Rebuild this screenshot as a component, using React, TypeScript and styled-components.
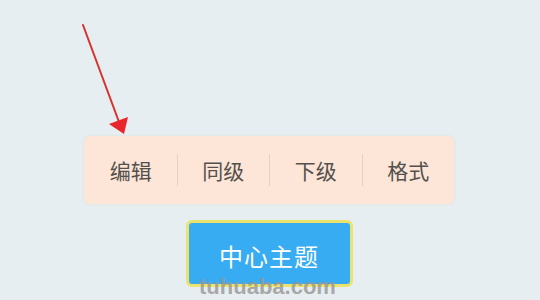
import styled, { createGlobalStyle } from "styled-components";

const GlobalStyle = createGlobalStyle`
  html, body {
    margin: 0;
    padding: 0;
    background: #e6eef1;
  }
`;

const items = ["编辑", "同级", "下级", "格式"];

export default function App() {
  return (
    <>
      <GlobalStyle />
      <Stage>
        <Arrow width="540" height="300" viewBox="0 0 540 300">
          <line x1="83" y1="25" x2="119" y2="122" stroke="#d8322c" strokeWidth="2" strokeLinecap="round" />
          <polygon points="124,134 109,124 128,117" fill="#e8262b" />
        </Arrow>
        <Toolbar>
          {items.map((label, i) => (
            <ToolItem key={label} $divider={i > 0}>
              {label}
            </ToolItem>
          ))}
        </Toolbar>
        <TopicButton>中心主题</TopicButton>
        <Watermark>tuhuaba.com</Watermark>
      </Stage>
    </>
  );
}

const Stage = styled.div`
  position: relative;
  width: 540px;
  height: 300px;
  box-sizing: border-box;
  padding-top: 136px;
  padding-right: 2px;
  display: flex;
  flex-direction: column;
  align-items: center;
  gap: 16px;
  overflow: hidden;
  font-family: "Noto Sans CJK SC", "Noto Sans", sans-serif;
`;

const Arrow = styled.svg`
  position: absolute;
  left: 0;
  top: 0;
  pointer-events: none;
  z-index: 2;
`;

const Toolbar = styled.div`
  width: 370px;
  height: 68px;
  display: grid;
  grid-template-columns: repeat(4, 1fr);
  align-items: center;
  background: #fde6d7;
  border-radius: 6px;
  box-shadow: 0 0 2px rgba(230, 200, 180, 0.6);
`;

const ToolItem = styled.div<{ $divider: boolean }>`
  height: 32px;
  display: flex;
  align-items: center;
  justify-content: center;
  font-size: 21px;
  color: #54504d;
  border-left: 1px solid ${({ $divider }) => ($divider ? "#efcfb9" : "transparent")};
`;

const TopicButton = styled.div`
  width: 167px;
  height: 67px;
  box-sizing: border-box;
  display: flex;
  align-items: center;
  justify-content: center;
  padding-top: 3px;
  background: #38acf3;
  border: 3px solid #ece36c;
  border-radius: 6px;
  color: #ffffff;
  font-size: 24px;
  letter-spacing: 1px;
`;

const Watermark = styled.div`
  position: absolute;
  left: 199px;
  top: 274px;
  font-family: "Liberation Sans", Arial, sans-serif;
  font-weight: bold;
  font-size: 22px;
  color: rgba(150, 150, 150, 0.8);
  pointer-events: none;
`;
